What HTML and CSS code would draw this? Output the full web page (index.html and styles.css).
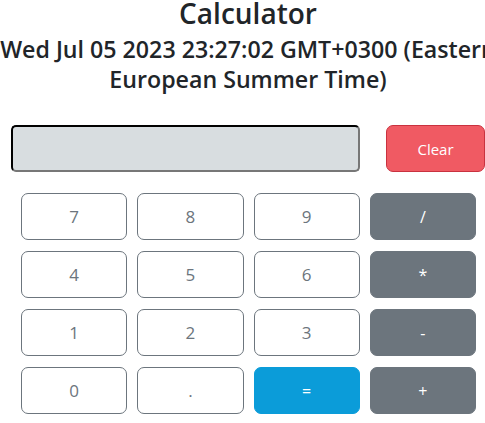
FILE: index.html
```html
<!DOCTYPE html>
<html lang="en">
<head>
<meta charset="utf-8">
<title>Calculator</title>
<link rel="stylesheet" href="styles.css">
</head>
<body>
<div class="page">
  <h1 class="title">Calculator</h1>
  <h2 class="date">Wed Jul 05 2023 23:27:02 GMT+0300 (Eastern<br>European Summer Time)</h2>
  <div class="top-row">
    <input class="display" type="text" readonly>
    <button class="btn btn-clear">Clear</button>
  </div>
  <div class="keys">
    <button class="btn btn-num">7</button>
    <button class="btn btn-num">8</button>
    <button class="btn btn-num">9</button>
    <button class="btn btn-op">/</button>
    <button class="btn btn-num">4</button>
    <button class="btn btn-num">5</button>
    <button class="btn btn-num">6</button>
    <button class="btn btn-op">*</button>
    <button class="btn btn-num">1</button>
    <button class="btn btn-num">2</button>
    <button class="btn btn-num">3</button>
    <button class="btn btn-op">-</button>
    <button class="btn btn-num">0</button>
    <button class="btn btn-num">.</button>
    <button class="btn btn-eq">=</button>
    <button class="btn btn-op">+</button>
  </div>
</div>
</body>
</html>
```

FILE: styles.css
```css
html, body {
  margin: 0;
  padding: 0;
  overflow: hidden;
  background: #ffffff;
}

body {
  font-family: "Open Sans", "Noto Sans", sans-serif;
  color: #212529;
}

.page {
  width: 496px;
}

.title {
  margin: 0;
  text-align: center;
  font-size: 28px;
  font-weight: 600;
  line-height: 26px;
}

.date {
  margin: 8px 0 0;
  text-align: center;
  font-size: 23.2px;
  font-weight: 600;
  line-height: 30px;
  white-space: nowrap;
}

.top-row {
  display: flex;
  gap: 26px;
  margin-top: 31px;
  padding-left: 11px;
}

.display {
  box-sizing: border-box;
  width: 349px;
  height: 47px;
  margin: 0;
  background: #d8dde0;
  border: 2px inset #777;
  border-top-color: #222;
  border-left-color: #222;
  border-radius: 5px;
}

.btn {
  box-sizing: border-box;
  height: 47px;
  margin: 0;
  font-family: "Open Sans", "Noto Sans", sans-serif;
  font-size: 16px;
  border-radius: 7px;
  cursor: pointer;
}

.btn-clear {
  width: 99px;
  background: #f05a63;
  border: 1px solid #c9323f;
  color: #fff;
  font-size: 15px;
}

.keys {
  display: grid;
  grid-template-columns: repeat(4, 1fr);
  column-gap: 10px;
  row-gap: 11px;
  width: 455px;
  margin: 21px 0 0 21px;
}

.btn-num {
  background: #fff;
  border: 1px solid #6c757d;
  color: #6c757d;
  font-size: 17px;
}

.btn-op {
  background: #6c757d;
  border: 1px solid #6c757d;
  color: #fff;
}

.btn-eq {
  background: #0b9cd9;
  border: 1px solid #0b9cd9;
  color: #fff;
}
```
